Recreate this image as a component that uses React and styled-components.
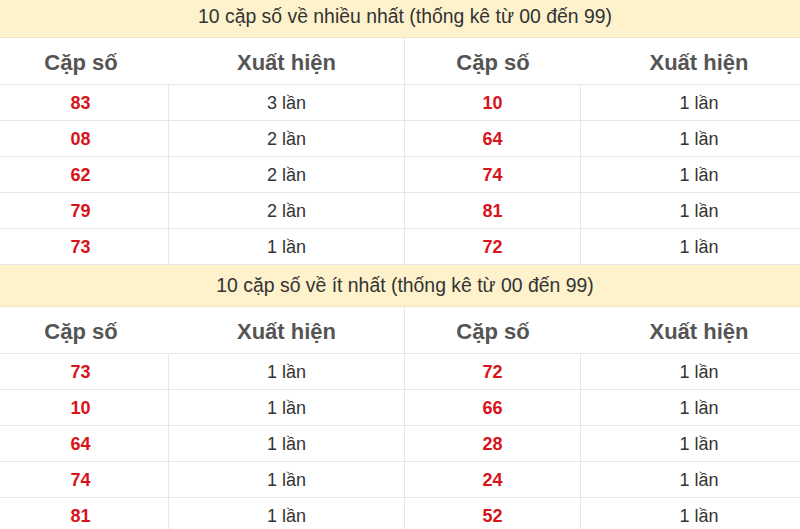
import React from "react";
import styled, { createGlobalStyle } from "styled-components";

const GlobalStyle = createGlobalStyle`
  html, body {
    margin: 0;
    padding: 0;
    background: #fff;
    overflow: hidden;
  }
  body {
    font-family: "Liberation Sans", Arial, sans-serif;
  }
`;

// the screenshot is cropped: the table starts a little left of the view and a bit above it
const Page = styled.div`
  width: 824px;
  margin: -4px 0 0 -7px;
`;

const Title = styled.div`
  height: 42px;
  display: flex;
  align-items: center;
  justify-content: center;
  background: #fdf2cc;
  border-bottom: 1px solid #f0e6c4;
  color: #333;
  font-size: 19.4px;
  box-sizing: border-box;
`;

const Grid = styled.div`
  display: grid;
  grid-template-columns: 176px 236px 176px 236px;
`;

const HeadCell = styled.div`
  height: 47px;
  padding-top: 3px;
  display: flex;
  align-items: center;
  justify-content: center;
  font-size: 22px;
  font-weight: bold;
  color: #555;
  border-bottom: 1px solid #e6e6e6;
  border-right: ${(p) => (p.$split ? "1px solid #e6e6e6" : "none")};
  box-sizing: border-box;
`;

const Cell = styled.div`
  height: 36px;
  padding-top: 2px;
  display: flex;
  align-items: center;
  justify-content: center;
  font-size: 18px;
  color: ${(p) => (p.$num ? "#d8141b" : "#333")};
  font-weight: ${(p) => (p.$num ? "bold" : "normal")};
  border-bottom: 1px solid #e6e6e6;
  border-right: ${(p) => (p.$last ? "none" : "1px solid #e6e6e6")};
  box-sizing: border-box;
`;

const most = [
  ["83", "3 lần", "10", "1 lần"],
  ["08", "2 lần", "64", "1 lần"],
  ["62", "2 lần", "74", "1 lần"],
  ["79", "2 lần", "81", "1 lần"],
  ["73", "1 lần", "72", "1 lần"],
];

const least = [
  ["73", "1 lần", "72", "1 lần"],
  ["10", "1 lần", "66", "1 lần"],
  ["64", "1 lần", "28", "1 lần"],
  ["74", "1 lần", "24", "1 lần"],
  ["81", "1 lần", "52", "1 lần"],
];

const Section = ({ title, rows }) => (
  <>
    <Title>{title}</Title>
    <Grid>
      <HeadCell>Cặp số</HeadCell>
      <HeadCell $split>Xuất hiện</HeadCell>
      <HeadCell>Cặp số</HeadCell>
      <HeadCell>Xuất hiện</HeadCell>
      {rows.map((r, i) =>
        r.map((v, j) => (
          <Cell key={i + "-" + j} $num={j % 2 === 0} $last={j === 3}>
            {v}
          </Cell>
        ))
      )}
    </Grid>
  </>
);

export default function App() {
  return (
    <Page>
      <GlobalStyle />
      <Section title="10 cặp số về nhiều nhất (thống kê từ 00 đến 99)" rows={most} />
      <Section title="10 cặp số về ít nhất (thống kê từ 00 đến 99)" rows={least} />
    </Page>
  );
}
